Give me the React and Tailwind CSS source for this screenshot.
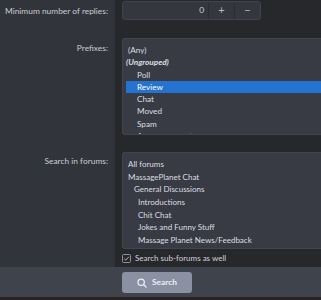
import React from "react";

const prefixes = [
  { t: "(Any)", cls: "pl-[2px]" },
  { t: "(Ungrouped)", cls: "pl-0 font-bold italic" },
  { t: "Poll", cls: "pl-[11px]" },
  { t: "Review", cls: "pl-[11px] bg-[#2573d1] text-white" },
  { t: "Chat", cls: "pl-[11px]" },
  { t: "Moved", cls: "pl-[11px]" },
  { t: "Spam", cls: "pl-[11px]" },
  { t: "Announcement", cls: "pl-[11px]" },
];

const forums = [
  { t: "All forums", cls: "pl-[2px]" },
  { t: "MassagePlanet Chat", cls: "pl-[2px]" },
  { t: "General Discussions", cls: "pl-[8px]" },
  { t: "Introductions", cls: "pl-[12px]" },
  { t: "Chit Chat", cls: "pl-[12px]" },
  { t: "Jokes and Funny Stuff", cls: "pl-[12px]" },
  { t: "Massage Planet News/Feedback", cls: "pl-[12px]" },
  { t: "Off Topic", cls: "pl-[12px]" },
];

function Label({ children, pt }) {
  return (
    <div
      className={`w-[116px] shrink-0 bg-[#31343b] border-r border-[#25272b] text-right pr-[7px] text-[8.4px] leading-[14px] whitespace-nowrap text-[#c9ccd2] ${pt}`}
    >
      {children}
    </div>
  );
}

export default function App() {
  return (
    <div
      className="w-[321px] h-[300px] overflow-hidden bg-[#27282c] flex flex-col"
      style={{ fontFamily: 'Lato, "Noto Sans", sans-serif' }}
    >
      {/* Row 1 */}
      <div className="flex">
        <Label pt="pt-[4px]">Minimum number of replies:</Label>
        <div className="flex-1 pl-[6px] pt-[1px] pb-[9px]">
          <div className="flex h-[19px] w-[139px] rounded-[3px] border border-[#41444c] bg-[#34373e] text-[8.4px] text-[#d0d3d8]">
            <div className="flex-1 flex items-center justify-end pr-[4px]">0</div>
            <div className="w-[26px] flex items-center justify-center border-l border-[#2b2d32] text-[#b5b8be] text-[11px]">+</div>
            <div className="w-[26px] flex items-center justify-center border-l border-[#2b2d32] text-[#b5b8be] text-[11px]">−</div>
          </div>
        </div>
      </div>

      {/* Row 2 */}
      <div className="flex">
        <Label pt="pt-[12px]">Prefixes:</Label>
        <div className="flex-1 pl-[6px] pt-[9px] pb-[8px]">
          <div className="h-[97px] overflow-hidden rounded-tl-[3px] rounded-bl-[3px] border border-r-0 border-[#42454d] bg-[#383b43] pt-[5px] pl-[3px] text-[8.2px] text-[#dcdee3]">
            {prefixes.map((p) => (
              <div key={p.t} className={`h-[12.3px] leading-[12.3px] whitespace-nowrap ${p.cls}`}>
                {p.t}
              </div>
            ))}
          </div>
        </div>
      </div>

      {/* Row 3 */}
      <div className="flex">
        <Label pt="pt-[11px]">Search in forums:</Label>
        <div className="flex-1 pl-[6px] pt-[9px]">
          <div className="h-[97px] overflow-hidden rounded-tl-[3px] rounded-bl-[3px] border border-r-0 border-[#42454d] bg-[#383b43] pt-[5px] pl-[3px] text-[8px] text-[#dcdee3]">
            {forums.map((p) => (
              <div key={p.t} className={`h-[12.7px] leading-[12.7px] whitespace-nowrap ${p.cls}`}>
                {p.t}
              </div>
            ))}
          </div>
        </div>
      </div>

      {/* Row 4 checkbox */}
      <div className="flex flex-1">
        <Label pt="pt-0" />
        <div className="flex-1 pl-[6px] pt-[3px] flex items-start">
          <div className="flex items-center gap-[4px] h-[12px]">
            <svg width="9" height="9" viewBox="0 0 9 9" className="shrink-0">
              <rect x="0.5" y="0.5" width="8" height="8" rx="1" fill="none" stroke="#8e9198" />
              <path d="M2.2 4.6 L3.8 6.1 L6.8 2.8" fill="none" stroke="#aeb1b7" strokeWidth="1" />
            </svg>
            <span className="text-[8px] leading-[12px] text-[#d0d3d8]">Search sub-forums as well</span>
          </div>
        </div>
      </div>

      {/* Footer */}
      <div className="h-[30px] shrink-0 bg-[#3f434c] pl-[122px] pt-[5px]">
        <button className="h-[21px] w-[70px] rounded-[3px] bg-[#8991a3] flex items-center justify-center gap-[5px] text-[8.4px] font-bold text-[#eef0f3]">
          <svg width="10" height="10" viewBox="0 0 12 12" fill="none" stroke="#eef0f3" strokeWidth="1.5">
            <circle cx="5" cy="5" r="3.8" />
            <path d="M7.8 7.8 L11 11" strokeLinecap="round" />
          </svg>
          Search
        </button>
      </div>
      <div className="h-[3px] shrink-0 bg-[#2a2222]" />
    </div>
  );
}
